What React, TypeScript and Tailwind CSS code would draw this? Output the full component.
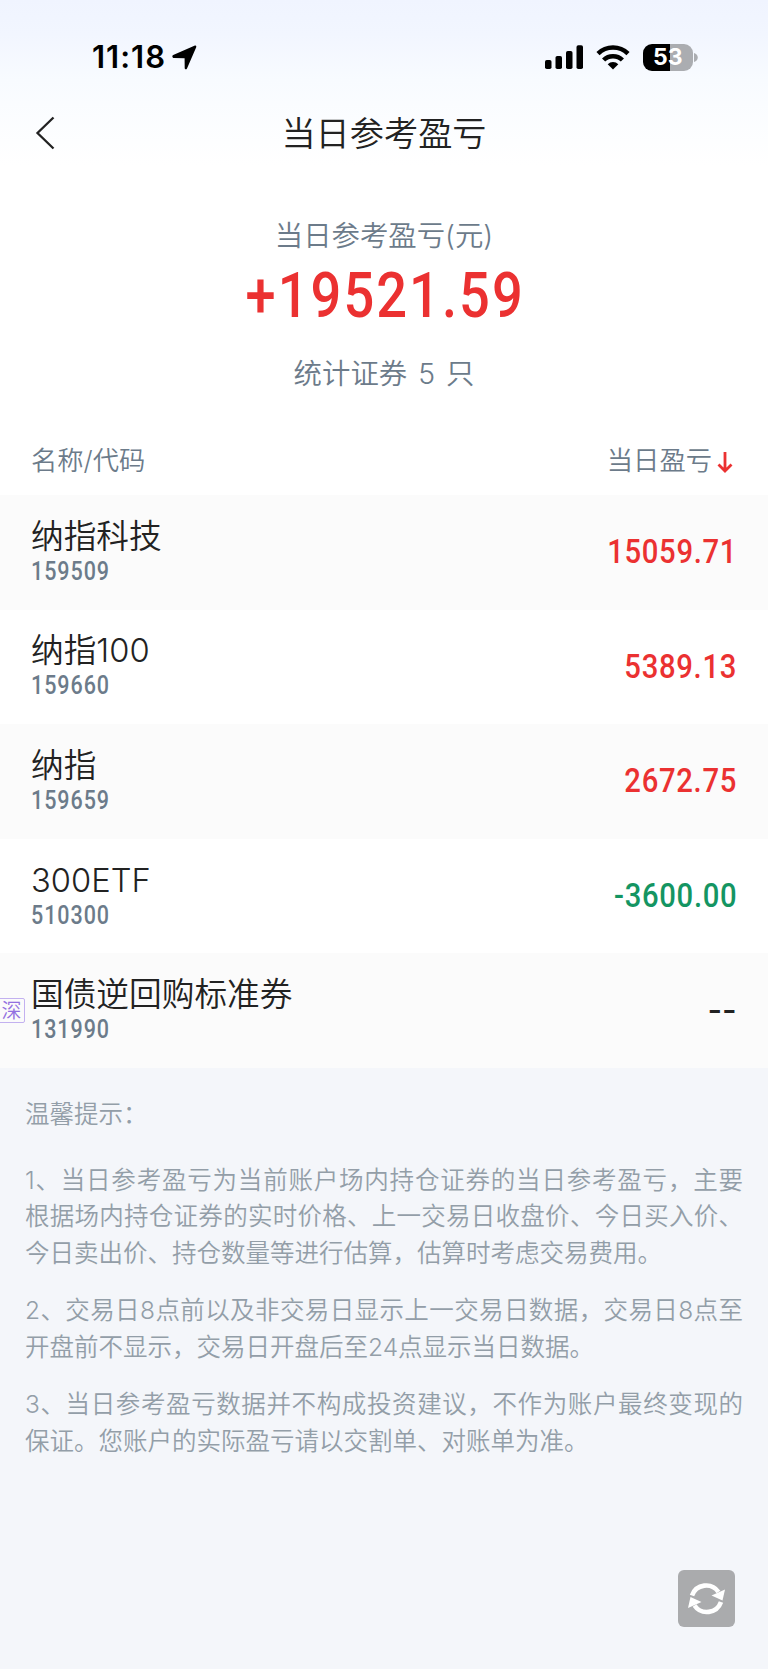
import React from "react";

type Holding = {
  name: string;
  code: string;
  value: string;
  tone: "up" | "down" | "flat";
  market?: string;
};

const holdings: Holding[] = [
  { name: "纳指科技", code: "159509", value: "15059.71", tone: "up" },
  { name: "纳指100", code: "159660", value: "5389.13", tone: "up" },
  { name: "纳指", code: "159659", value: "2672.75", tone: "up" },
  { name: "300ETF", code: "510300", value: "-3600.00", tone: "down" },
  { name: "国债逆回购标准券", code: "131990", value: "--", tone: "flat", market: "深" },
];

const notes: string[][] = [
  [
    "1、当日参考盈亏为当前账户场内持仓证券的当日参考盈亏，主要",
    "根据场内持仓证券的实时价格、上一交易日收盘价、今日买入价、",
    "今日卖出价、持仓数量等进行估算，估算时考虑交易费用。",
  ],
  [
    "2、交易日8点前以及非交易日显示上一交易日数据，交易日8点至",
    "开盘前不显示，交易日开盘后至24点显示当日数据。",
  ],
  [
    "3、当日参考盈亏数据并不构成投资建议，不作为账户最终变现的",
    "保证。您账户的实际盈亏请以交割单、对账单为准。",
  ],
];

const toneClass = {
  up: "scale-x-[0.86] tracking-[0.800px] text-[#eb3131]",
  down: "scale-x-[0.86] tracking-[0.800px] text-[#149562]",
  flat: "scale-x-[1.15] tracking-[1px] text-[#222222]",
};

function StatusBar() {
  return (
    <div className="flex h-[88px] items-end justify-between pr-[70px] pb-[17px] pl-[92px] text-black">
      <div className="flex items-center gap-[6px]">
        <span className="font-['Inter'] text-[31px] leading-[28px] font-semibold tracking-[1px]">11:18</span>
        <svg width="25" height="25" viewBox="0 0 25 25">
          <path d="M1.200 10 22.400.7c1.500-.6 2.300.2 1.700 1.700L15 23.400c-.6 1.400-2.300 1.100-2.300-.4l-.1-9.800-10.500-.2C.1 12.900-.2 10.700 1.200 10Z" fill="currentColor" />
        </svg>
      </div>
      <div className="flex items-center">
        <svg width="39" height="25" viewBox="0 0 39 25" fill="currentColor">
          <rect x="0" y="15" width="6.500" height="9" rx="1.800" />
          <rect x="10.500" y="11" width="6.500" height="13" rx="1.800" />
          <rect x="21" y="6" width="6.500" height="18" rx="1.800" />
          <rect x="31.500" y="0.300" width="6.500" height="23.700" rx="1.800" />
        </svg>
        <svg className="ml-3" width="34" height="25" viewBox="0 0 34 25" fill="none" stroke="currentColor" strokeWidth="4.500">
          <path d="M2 8.700a21.500 21.500 0 0 1 30 0" />
          <path d="M7.600 15a13.400 13.400 0 0 1 18.800 0" />
          <path d="M17 24.500 11.700 19.200a7.300 7.300 0 0 1 10.600 0Z" fill="currentColor" stroke="none" />
        </svg>
        <div className="ml-[13px] flex h-[27px] w-[49.500px] items-center justify-center rounded-[9px] bg-[linear-gradient(90deg,#000_0,#000_26.500px,#abadb1_26.500px)] font-['Inter'] text-[23px] leading-none font-bold text-white">
          53
        </div>
        <svg className="ml-[1.500px]" width="4" height="9" viewBox="0 0 4 9">
          <path d="M0 0c5 1.500 5 7.500 0 9Z" fill="#abadb1" />
        </svg>
      </div>
    </div>
  );
}

function NavBar() {
  return (
    <div className="grid h-[90px] grid-cols-[1fr_auto_1fr] items-center text-[#222222]">
      <svg className="ml-[35px]" width="20" height="34" viewBox="0 0 20 34" fill="none" stroke="currentColor" strokeWidth="2.300">
        <path d="M18.500 1.500 2.500 17l16 15.500" />
      </svg>
      <h1 className="pt-[1px] text-[34.200px] leading-[44px]">当日参考盈亏</h1>
    </div>
  );
}

function Summary() {
  return (
    <section className="flex h-[246px] flex-col items-center pt-[37px] text-[#6c7b8a]">
      <p className="text-[28.400px] leading-[42px]">当日参考盈亏(元)</p>
      <p className="mt-[7px] origin-center scale-x-[0.86] pl-[3px] font-['Roboto'] text-[63px] leading-[64px] font-medium tracking-[2.400px] text-[#eb3131]">
        +19521.59
      </p>
      <p className="mt-[25px] text-[28.400px] leading-[42px] [word-spacing:3px]">统计证券 5 只</p>
    </section>
  );
}

function HoldingRow({ item }: { item: Holding }) {
  return (
    <li className="relative flex h-[114.600px] items-center justify-between pr-[31px] pb-[1px] pl-[31px] odd:bg-[#fbfbfb]">
      {item.market && (
        <span className="absolute top-[45px] left-[-2px] flex h-[25px] w-[27px] items-center justify-center rounded-[2px] border border-[#c3b1f0] text-[20px] leading-none text-[#9270e0]">
          {item.market}
        </span>
      )}
      <div className="flex flex-col items-start">
        <span className="text-[32.700px] leading-[39px] text-[#222222]">{item.name}</span>
        <span className="mt-[1px] origin-left scale-x-[0.86] font-['Roboto'] text-[25px] leading-[30px] font-medium tracking-[1.100px] text-[#6c7b8a]">
          {item.code}
        </span>
      </div>
      <span className={`-mt-[1px] origin-right font-['Roboto'] text-[34px] leading-[40px] font-medium ${toneClass[item.tone]}`}>
        {item.value}
      </span>
    </li>
  );
}

export default function App() {
  return (
    <main className="flex h-[1669px] w-[768px] flex-col overflow-hidden bg-[#f4f6fa] font-['Inter','Noto_Sans_CJK_SC',sans-serif] font-[350]">
      <div className="bg-[linear-gradient(180deg,#f0f4ff_0,#f2f6ff_34px,#f8fbff_80px,#ffffff_165px)]">
        <StatusBar />
        <NavBar />
        <Summary />
        <div className="flex h-[71px] items-center justify-between pt-[3px] pr-[35px] pl-[31px] text-[26.300px] leading-none text-[#6c7b8a]">
          <span>名称/代码</span>
          <span className="flex items-center gap-[5px]">
            当日盈亏
            <svg className="mt-1" width="16" height="22" viewBox="0 0 16 22" fill="none" stroke="#eb3131" strokeWidth="2.800">
              <path d="M8 0v19M1.500 12.500 8 19l6.500-6.500" />
            </svg>
          </span>
        </div>
      </div>
      <ul className="bg-white">
        {holdings.map((item) => (
          <HoldingRow key={item.code} item={item} />
        ))}
      </ul>
      <section className="px-[25px] pt-[28px] text-[24.500px] leading-[36.700px] text-[#939ea8]">
        <p>温馨提示：</p>
        <div className="mt-[29px] flex flex-col gap-[20.500px]">
          {notes.map((lines) => (
            <p key={lines[0]}>
              {lines.map((line) => (
                <span key={line} className="block whitespace-nowrap [text-align-last:justify] last:[text-align-last:left]">
                  {line}
                </span>
              ))}
            </p>
          ))}
        </div>
      </section>
      <button className="mt-auto mr-[33px] mb-[42px] flex size-[57px] items-center justify-center self-end rounded-[6px] bg-[#aaabad]" aria-label="刷新">
        <svg width="39" height="36" viewBox="0 0 39 36" fill="none" stroke="#fff" strokeWidth="4.600">
          <path d="M5 14.500A15 15 0 0 1 31.500 11" />
          <path d="M34 21A15 15 0 0 1 7.500 24.500" />
          <path d="M38 8.500 35.500 19.500 24.500 14.500Z" fill="#fff" stroke="none" />
          <path d="M1 27 3.500 16 14.500 21Z" fill="#fff" stroke="none" />
        </svg>
      </button>
    </main>
  );
}
